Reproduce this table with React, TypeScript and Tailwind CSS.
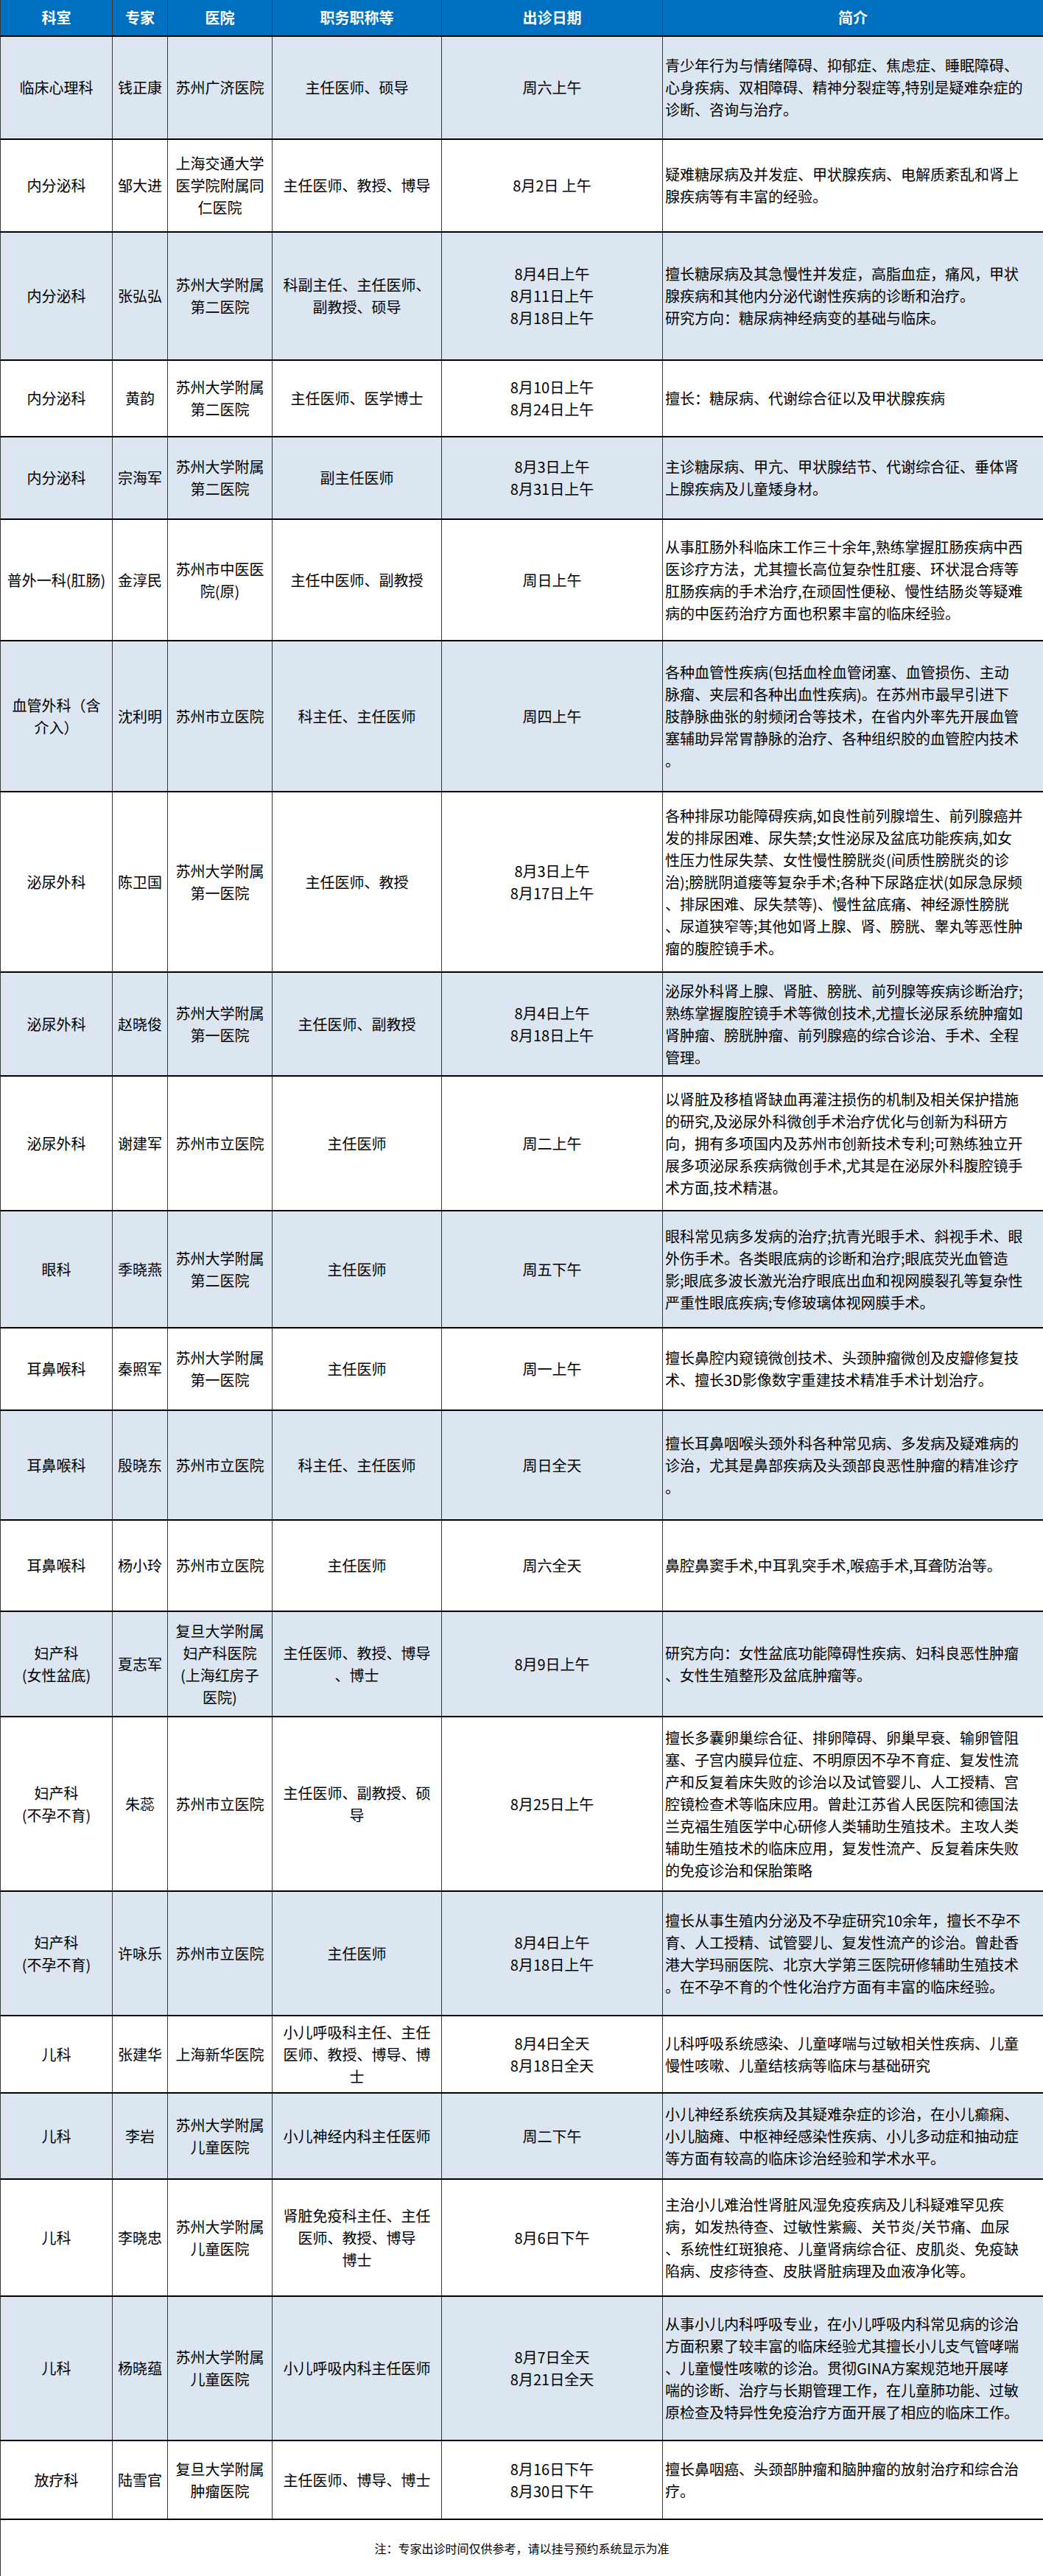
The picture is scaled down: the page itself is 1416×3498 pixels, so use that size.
import React from "react";

type Row = {
  dept: string[];
  name: string;
  hosp: string[];
  title: string[];
  date: string[];
  intro: string[];
  h: number;
};

const rows: Row[] = [
  {
    dept: ["临床心理科"], name: "钱正康", hosp: ["苏州广济医院"], title: ["主任医师、硕导"], date: ["周六上午"], h: 140,
    intro: ["青少年行为与情绪障碍、抑郁症、焦虑症、睡眠障碍、", "心身疾病、双相障碍、精神分裂症等,特别是疑难杂症的", "诊断、咨询与治疗。"],
  },
  {
    dept: ["内分泌科"], name: "邹大进", hosp: ["上海交通大学", "医学院附属同", "仁医院"], title: ["主任医师、教授、博导"], date: ["8月2日 上午"], h: 126,
    intro: ["疑难糖尿病及并发症、甲状腺疾病、电解质紊乱和肾上", "腺疾病等有丰富的经验。"],
  },
  {
    dept: ["内分泌科"], name: "张弘弘", hosp: ["苏州大学附属", "第二医院"], title: ["科副主任、主任医师、", "副教授、硕导"], date: ["8月4日上午", "8月11日上午", "8月18日上午"], h: 174,
    intro: ["擅长糖尿病及其急慢性并发症，高脂血症，痛风，甲状", "腺疾病和其他内分泌代谢性疾病的诊断和治疗。", "研究方向：糖尿病神经病变的基础与临床。"],
  },
  {
    dept: ["内分泌科"], name: "黄韵", hosp: ["苏州大学附属", "第二医院"], title: ["主任医师、医学博士"], date: ["8月10日上午", "8月24日上午"], h: 104,
    intro: ["擅长：糖尿病、代谢综合征以及甲状腺疾病"],
  },
  {
    dept: ["内分泌科"], name: "宗海军", hosp: ["苏州大学附属", "第二医院"], title: ["副主任医师"], date: ["8月3日上午", "8月31日上午"], h: 112,
    intro: ["主诊糖尿病、甲亢、甲状腺结节、代谢综合征、垂体肾", "上腺疾病及儿童矮身材。"],
  },
  {
    dept: ["普外一科(肛肠)"], name: "金淳民", hosp: ["苏州市中医医", "院(原)"], title: ["主任中医师、副教授"], date: ["周日上午"], h: 165,
    intro: ["从事肛肠外科临床工作三十余年,熟练掌握肛肠疾病中西", "医诊疗方法，尤其擅长高位复杂性肛瘘、环状混合痔等", "肛肠疾病的手术治疗,在顽固性便秘、慢性结肠炎等疑难", "病的中医药治疗方面也积累丰富的临床经验。"],
  },
  {
    dept: ["血管外科（含", "介入）"], name: "沈利明", hosp: ["苏州市立医院"], title: ["科主任、主任医师"], date: ["周四上午"], h: 205,
    intro: ["各种血管性疾病(包括血栓血管闭塞、血管损伤、主动", "脉瘤、夹层和各种出血性疾病)。在苏州市最早引进下", "肢静脉曲张的射频闭合等技术，在省内外率先开展血管", "塞辅助异常胃静脉的治疗、各种组织胶的血管腔内技术", "。"],
  },
  {
    dept: ["泌尿外科"], name: "陈卫国", hosp: ["苏州大学附属", "第一医院"], title: ["主任医师、教授"], date: ["8月3日上午", "8月17日上午"], h: 245,
    intro: ["各种排尿功能障碍疾病,如良性前列腺增生、前列腺癌并", "发的排尿困难、尿失禁;女性泌尿及盆底功能疾病,如女", "性压力性尿失禁、女性慢性膀胱炎(间质性膀胱炎的诊", "治);膀胱阴道瘘等复杂手术;各种下尿路症状(如尿急尿频", "、排尿困难、尿失禁等)、慢性盆底痛、神经源性膀胱", "、尿道狭窄等;其他如肾上腺、肾、膀胱、睾丸等恶性肿", "瘤的腹腔镜手术。"],
  },
  {
    dept: ["泌尿外科"], name: "赵晓俊", hosp: ["苏州大学附属", "第一医院"], title: ["主任医师、副教授"], date: ["8月4日上午", "8月18日上午"], h: 141,
    intro: ["泌尿外科肾上腺、肾脏、膀胱、前列腺等疾病诊断治疗;", "熟练掌握腹腔镜手术等微创技术,尤擅长泌尿系统肿瘤如", "肾肿瘤、膀胱肿瘤、前列腺癌的综合诊治、手术、全程", "管理。"],
  },
  {
    dept: ["泌尿外科"], name: "谢建军", hosp: ["苏州市立医院"], title: ["主任医师"], date: ["周二上午"], h: 183,
    intro: ["以肾脏及移植肾缺血再灌注损伤的机制及相关保护措施", "的研究,及泌尿外科微创手术治疗优化与创新为科研方", "向，拥有多项国内及苏州市创新技术专利;可熟练独立开", "展多项泌尿系疾病微创手术,尤其是在泌尿外科腹腔镜手", "术方面,技术精湛。"],
  },
  {
    dept: ["眼科"], name: "季晓燕", hosp: ["苏州大学附属", "第二医院"], title: ["主任医师"], date: ["周五下午"], h: 159,
    intro: ["眼科常见病多发病的治疗;抗青光眼手术、斜视手术、眼", "外伤手术。各类眼底病的诊断和治疗;眼底荧光血管造", "影;眼底多波长激光治疗眼底出血和视网膜裂孔等复杂性", "严重性眼底疾病;专修玻璃体视网膜手术。"],
  },
  {
    dept: ["耳鼻喉科"], name: "秦照军", hosp: ["苏州大学附属", "第一医院"], title: ["主任医师"], date: ["周一上午"], h: 112,
    intro: ["擅长鼻腔内窥镜微创技术、头颈肿瘤微创及皮瓣修复技", "术、擅长3D影像数字重建技术精准手术计划治疗。"],
  },
  {
    dept: ["耳鼻喉科"], name: "殷晓东", hosp: ["苏州市立医院"], title: ["科主任、主任医师"], date: ["周日全天"], h: 149,
    intro: ["擅长耳鼻咽喉头颈外科各种常见病、多发病及疑难病的", "诊治，尤其是鼻部疾病及头颈部良恶性肿瘤的精准诊疗", "。"],
  },
  {
    dept: ["耳鼻喉科"], name: "杨小玲", hosp: ["苏州市立医院"], title: ["主任医师"], date: ["周六全天"], h: 124,
    intro: ["鼻腔鼻窦手术,中耳乳突手术,喉癌手术,耳聋防治等。"],
  },
  {
    dept: ["妇产科", "(女性盆底)"], name: "夏志军", hosp: ["复旦大学附属", "妇产科医院", "(上海红房子", "医院)"], title: ["主任医师、教授、博导", "、博士"], date: ["8月9日上午"], h: 143,
    intro: ["研究方向：女性盆底功能障碍性疾病、妇科良恶性肿瘤", "、女性生殖整形及盆底肿瘤等。"],
  },
  {
    dept: ["妇产科", "(不孕不育)"], name: "朱蕊", hosp: ["苏州市立医院"], title: ["主任医师、副教授、硕", "导"], date: ["8月25日上午"], h: 237,
    intro: ["擅长多囊卵巢综合征、排卵障碍、卵巢早衰、输卵管阻", "塞、子宫内膜异位症、不明原因不孕不育症、复发性流", "产和反复着床失败的诊治以及试管婴儿、人工授精、宫", "腔镜检查术等临床应用。曾赴江苏省人民医院和德国法", "兰克福生殖医学中心研修人类辅助生殖技术。主攻人类", "辅助生殖技术的临床应用，复发性流产、反复着床失败", "的免疫诊治和保胎策略"],
  },
  {
    dept: ["妇产科", "(不孕不育)"], name: "许咏乐", hosp: ["苏州市立医院"], title: ["主任医师"], date: ["8月4日上午", "8月18日上午"], h: 169,
    intro: ["擅长从事生殖内分泌及不孕症研究10余年，擅长不孕不", "育、人工授精、试管婴儿、复发性流产的诊治。曾赴香", "港大学玛丽医院、北京大学第三医院研修辅助生殖技术", "。在不孕不育的个性化治疗方面有丰富的临床经验。"],
  },
  {
    dept: ["儿科"], name: "张建华", hosp: ["上海新华医院"], title: ["小儿呼吸科主任、主任", "医师、教授、博导、博", "士"], date: ["8月4日全天", "8月18日全天"], h: 105,
    intro: ["儿科呼吸系统感染、儿童哮喘与过敏相关性疾病、儿童", "慢性咳嗽、儿童结核病等临床与基础研究"],
  },
  {
    dept: ["儿科"], name: "李岩", hosp: ["苏州大学附属", "儿童医院"], title: ["小儿神经内科主任医师"], date: ["周二下午"], h: 117,
    intro: ["小儿神经系统疾病及其疑难杂症的诊治，在小儿癫痫、", "小儿脑瘫、中枢神经感染性疾病、小儿多动症和抽动症", "等方面有较高的临床诊治经验和学术水平。"],
  },
  {
    dept: ["儿科"], name: "李晓忠", hosp: ["苏州大学附属", "儿童医院"], title: ["肾脏免疫科主任、主任", "医师、教授、博导", "博士"], date: ["8月6日下午"], h: 159,
    intro: ["主治小儿难治性肾脏风湿免疫疾病及儿科疑难罕见疾", "病，如发热待查、过敏性紫癜、关节炎/关节痛、血尿", "、系统性红斑狼疮、儿童肾病综合征、皮肌炎、免疫缺", "陷病、皮疹待查、皮肤肾脏病理及血液净化等。"],
  },
  {
    dept: ["儿科"], name: "杨晓蕴", hosp: ["苏州大学附属", "儿童医院"], title: ["小儿呼吸内科主任医师"], date: ["8月7日全天", "8月21日全天"], h: 196,
    intro: ["从事小儿内科呼吸专业，在小儿呼吸内科常见病的诊治", "方面积累了较丰富的临床经验尤其擅长小儿支气管哮喘", "、儿童慢性咳嗽的诊治。贯彻GINA方案规范地开展哮", "喘的诊断、治疗与长期管理工作，在儿童肺功能、过敏", "原检查及特异性免疫治疗方面开展了相应的临床工作。"],
  },
  {
    dept: ["放疗科"], name: "陆雪官", hosp: ["复旦大学附属", "肿瘤医院"], title: ["主任医师、博导、博士"], date: ["8月16日下午", "8月30日下午"], h: 107,
    intro: ["擅长鼻咽癌、头颈部肿瘤和脑肿瘤的放射治疗和综合治", "疗。"],
  },
];

const Lines = ({ lines }: { lines: string[] }) => (
  <div>
    {lines.map((l, i) => (
      <div key={i} className="whitespace-nowrap">
        {l}
      </div>
    ))}
  </div>
);

const cellC =
  "flex items-center justify-center text-center border-r border-[#3a3a3a] overflow-hidden";

export default function App() {
  return (
    <div
      className="w-[1416px] h-[3498px] bg-white text-black text-[20px] leading-[30px]"
      style={{ fontFamily: '"Noto Sans CJK SC", "Noto Sans", sans-serif' }}
    >
      <div className="grid grid-cols-[152px_75px_142px_230px_300px_517px] h-[50px] bg-[#0070C0] text-white font-bold border-b-2 border-black border-l border-l-[#3a3a3a]">
        {["科室", "专家", "医院", "职务职称等", "出诊日期", "简介"].map((t) => (
          <div key={t} className={cellC}>
            {t}
          </div>
        ))}
      </div>
      {rows.map((r, i) => (
        <div
          key={i}
          className={`grid grid-cols-[152px_75px_142px_230px_300px_517px] border-b-2 border-black border-l border-l-[#3a3a3a] ${
            i % 2 === 0 ? "bg-[#DCE6F1]" : "bg-white"
          }`}
          style={{ height: r.h }}
        >
          <div className={cellC}>
            <Lines lines={r.dept} />
          </div>
          <div className={cellC}>
            <div className="whitespace-nowrap">{r.name}</div>
          </div>
          <div className={cellC}>
            <Lines lines={r.hosp} />
          </div>
          <div className={cellC}>
            <Lines lines={r.title} />
          </div>
          <div className={cellC}>
            <Lines lines={r.date} />
          </div>
          <div className="flex items-center pl-[3px] border-r border-[#3a3a3a] overflow-hidden">
            <Lines lines={r.intro} />
          </div>
        </div>
      ))}
      <div className="h-[76px] flex items-center justify-center border-l border-[#3a3a3a] text-[16px]">
        注：专家出诊时间仅供参考，请以挂号预约系统显示为准
      </div>
    </div>
  );
}
